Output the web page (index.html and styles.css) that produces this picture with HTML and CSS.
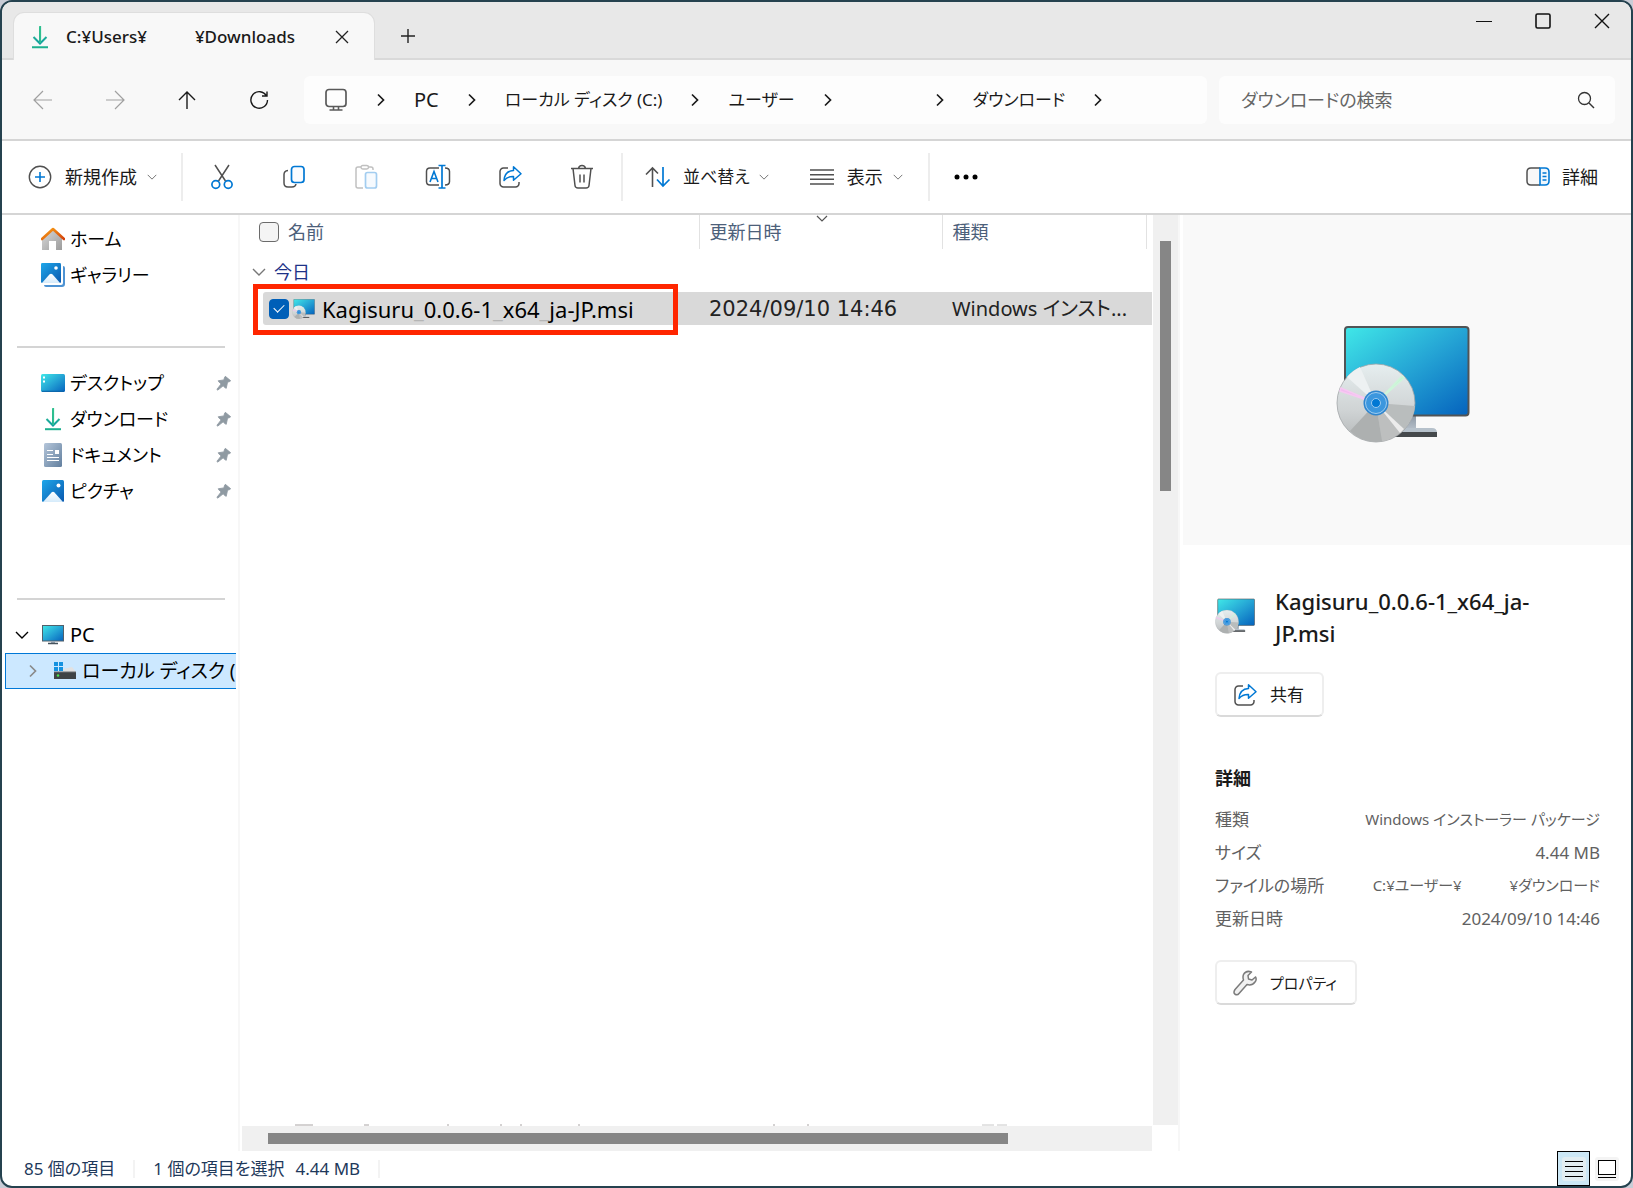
FILE: index.html
```html
<!DOCTYPE html>
<html lang="ja">
<head>
<meta charset="utf-8">
<title>ダウンロード</title>
<meta name="viewport" content="width=device-width, initial-scale=1">
<link rel="stylesheet" href="styles.css">
</head>
<body>
<svg class="defs" width="0" height="0" aria-hidden="true">
  <defs>
    <linearGradient id="g-screen" x1="0" y1="0" x2="1" y2="1"><stop offset="0" stop-color="#40e8e8"/><stop offset=".5" stop-color="#25a5d5"/><stop offset="1" stop-color="#0562bd"/></linearGradient>
    <linearGradient id="g-down" x1="0" y1="0" x2="0" y2="1"><stop offset="0" stop-color="#3ccb8c"/><stop offset="1" stop-color="#0f9da0"/></linearGradient>
    <linearGradient id="g-photo" x1="0" y1="0" x2="1" y2="1"><stop offset="0" stop-color="#1ea7ea"/><stop offset="1" stop-color="#0a58ae"/></linearGradient>
    <linearGradient id="g-hill" x1="0" y1="0" x2="0" y2="1"><stop offset="0" stop-color="#fff"/><stop offset="1" stop-color="#d5ebfb"/></linearGradient>
    <linearGradient id="g-wall" x1="0" y1="0" x2="1" y2="1"><stop offset="0" stop-color="#dadada"/><stop offset="1" stop-color="#9c9c9c"/></linearGradient>
    <linearGradient id="g-roof" x1="0" y1="0" x2="1" y2="1"><stop offset="0" stop-color="#fba417"/><stop offset="1" stop-color="#d3410b"/></linearGradient>
    <linearGradient id="g-doc" x1="0" y1="0" x2="1" y2="1"><stop offset="0" stop-color="#b5c6da"/><stop offset="1" stop-color="#627f9e"/></linearGradient>
    <linearGradient id="g-disc" x1="0" y1="0" x2="0" y2="1"><stop offset="0" stop-color="#e6eeef"/><stop offset=".6" stop-color="#cfd3d4"/><stop offset="1" stop-color="#b4b7b8"/></linearGradient>
    <linearGradient id="g-stand" x1="0" y1="0" x2="0" y2="1"><stop offset="0" stop-color="#8d98a4"/><stop offset="1" stop-color="#b9c3cd"/></linearGradient>
    <symbol id="i-download" viewBox="0 0 18 24"><path d="M9 1.500V18M2.500 12 9 18.500 15.500 12" fill="none" stroke="url(#g-down)" stroke-width="2"/><path d="M9.200 1V18" stroke="#2fbf90" stroke-width="1.800"/><path d="M1 22.200H17" stroke="#1db08f" stroke-width="2"/></symbol>
    <symbol id="i-right" viewBox="0 0 8 14"><path d="M1 1.500 6.500 7 1 12.500" fill="none" stroke="currentColor" stroke-width="1.700"/></symbol>
    <symbol id="i-down" viewBox="0 0 14 8"><path d="M1 1 7 7 13 1" fill="none" stroke="currentColor" stroke-width="1.400"/></symbol>
    <symbol id="i-share" viewBox="0 0 24 24"><path d="M10 3H5.500A3.500 3.500 0 0 0 2 6.500v12A3.500 3.500 0 0 0 5.500 22h12a3.500 3.500 0 0 0 3.500-3.500V17" fill="none" stroke="#505050" stroke-width="1.500"/><path d="M15.500 1.800 23 8.700 15.500 15.200V11.500C11 11.300 8.500 12.500 6 15.500 6.500 9.500 9.500 5.800 15.500 5.500Z" fill="none" stroke="#0078d4" stroke-width="1.500" stroke-linejoin="round"/></symbol>
    <symbol id="i-photo" viewBox="0 0 22 22"><rect width="22" height="22" rx="1.500" fill="url(#g-photo)"/><path d="M1 22 9.500 12.500Q11 11 12.500 12.500L21 22Z" fill="url(#g-hill)"/><circle cx="16.500" cy="5.500" r="2" fill="#fff"/></symbol>
    <symbol id="i-pin" viewBox="0 0 18 18"><path d="M10.500 1.500 16.500 6.500Q15 8 13 8L11.500 15Q10 14.500 8 12.200L2 17 1 16.200 5.800 10Q3 8 2.500 6.500L9 5.500Q9 3 10.500 1.500Z" fill="#8f9aa2" stroke="#8f9aa2" stroke-linejoin="round"/></symbol>
    <symbol id="i-pc" viewBox="0 0 22 20"><rect x=".5" y=".5" width="21" height="15.500" fill="url(#g-screen)" stroke="#52606b"/><path d="M9 16h4v2H9z" fill="#9aa7b3"/><path d="M6 18.500H16" stroke="#45525c" stroke-width="1.500"/></symbol>
    <symbol id="i-msi" viewBox="0 0 134 118">
      <path d="M63 90h17v16H63z" fill="url(#g-stand)"/><path d="M60 103h36q5 0 5 5H55z" fill="#b6c1cb"/><path d="M55 107h46v5H55z" fill="#45494c"/>
      <rect x="9" y="2" width="123.500" height="88.500" rx="3" fill="url(#g-screen)" stroke="#515456" stroke-width="2"/>
      <circle cx="40" cy="78" r="39" fill="url(#g-disc)" stroke="#a2a6a8" stroke-width=".8"/>
      <path d="M40 78 11 52A39 39 0 0 1 24 42Z" fill="#edf1f2"/><path d="M40 78 4 66 5 63Z" fill="#f3baf0" stroke="#f6c9f2" stroke-width="1.500"/><path d="M40 78 66 51 68 53Z" fill="#c8f3d5" stroke="#cff5da" stroke-width="1.500"/>
      <path d="M40 78 79 81A39 39 0 0 1 67 105Z" fill="#b9bdbd"/><path d="M40 78 67 105A39 39 0 0 1 46 116.500Z" fill="#bdbfbf"/><path d="M40 78 64 108 68 104Z" fill="#ececec"/><path d="M40 78 46 116.500A39 39 0 0 1 14 106Z" fill="#adb0b0"/>
      <circle cx="40" cy="78" r="12.500" fill="#2f86cf"/><circle cx="40" cy="78" r="10.500" fill="#3c97de" stroke="#a9d2f2" stroke-width=".9"/><circle cx="40" cy="78" r="4.500" fill="#0078d4" stroke="#9ccbf0" stroke-width="1"/>
    </symbol>
  </defs>
</svg>

<div class="window">
  <header class="titlebar">
    <div class="tab">
      <svg class="tab-icon" width="18" height="24"><use href="#i-download"/></svg>
      <span class="tab-title"><span>C:¥Users¥</span><span>¥Downloads</span></span>
      <button class="tab-close" aria-label="タブを閉じる"><svg width="14" height="14"><path d="M1 1 13 13M13 1 1 13" stroke="#222" stroke-width="1.300"/></svg></button>
    </div>
    <button class="tab-new" aria-label="新しいタブ"><svg width="16" height="16"><path d="M8 1V15M1 8H15" stroke="#222" stroke-width="1.400"/></svg></button>
    <div class="caption">
      <button aria-label="最小化"><svg width="16" height="16"><path d="M0 8.500H16" stroke="#111" stroke-width="1.200"/></svg></button>
      <button aria-label="最大化"><svg width="16" height="16"><rect x="1" y="1" width="14" height="14" rx="1.500" fill="none" stroke="#111" stroke-width="1.600"/></svg></button>
      <button aria-label="閉じる"><svg width="16" height="16"><path d="M1 1 15 15M15 1 1 15" stroke="#111" stroke-width="1.400"/></svg></button>
    </div>
  </header>

  <div class="navbar">
    <button class="step off" aria-label="戻る"><svg width="20" height="20"><path d="M19 10H1M10 1 1 10 10 19" fill="none" stroke="currentColor" stroke-width="1.200"/></svg></button>
    <button class="step off" aria-label="進む"><svg width="20" height="20"><path d="M1 10H19M10 1 19 10 10 19" fill="none" stroke="currentColor" stroke-width="1.200"/></svg></button>
    <button class="step" aria-label="上へ"><svg width="20" height="20"><path d="M10 19V2M2 10 10 2 18 10" fill="none" stroke="currentColor" stroke-width="1.400"/></svg></button>
    <button class="step" aria-label="更新"><svg width="20" height="20"><path d="M17.500 6A8.300 8.300 0 1 0 18.500 10M18 1.500V6H13" fill="none" stroke="currentColor" stroke-width="1.400"/></svg></button>
    <nav class="crumbs" aria-label="アドレス">
      <svg width="24" height="24"><rect x="2" y="1.500" width="20" height="17" rx="3" fill="none" stroke="#5a5a5a" stroke-width="1.700"/><path d="M9.500 18.500V22M14.500 18.500V22M5.500 22H18.500" fill="none" stroke="#5a5a5a" stroke-width="1.600"/></svg>
      <svg width="8" height="14"><use href="#i-right"/></svg>
      <a href="#pc" class="latin">PC</a>
      <svg width="8" height="14"><use href="#i-right"/></svg>
      <a href="#c">ローカル ディスク (C:)</a>
      <svg width="8" height="14"><use href="#i-right"/></svg>
      <a href="#users">ユーザー</a>
      <svg width="8" height="14"><use href="#i-right"/></svg>
      <span class="blank"></span>
      <svg width="8" height="14"><use href="#i-right"/></svg>
      <a href="#downloads">ダウンロード</a>
      <svg width="8" height="14"><use href="#i-right"/></svg>
    </nav>
    <div class="search">
      <input type="text" placeholder="ダウンロードの検索" aria-label="ダウンロードの検索">
      <svg width="18" height="18"><circle cx="7.500" cy="7.500" r="6" fill="none" stroke="#333" stroke-width="1.300"/><path d="M12 12 17 17" stroke="#333" stroke-width="1.400"/></svg>
    </div>
  </div>

  <div class="toolbar">
    <button class="tool-text new"><svg width="24" height="24"><circle cx="12" cy="12" r="10.700" fill="none" stroke="#505050" stroke-width="1.400"/><path d="M12 7V17M7 12H17" stroke="#0078d4" stroke-width="1.600"/></svg>新規作成<svg class="caret" width="10" height="6"><use href="#i-down"/></svg></button>
    <i class="sep"></i>
    <div class="tools">
    <button class="tool" aria-label="切り取り"><svg width="24" height="26"><path d="M5 1 15.500 17M19 1 8.500 17" stroke="#505050" stroke-width="1.500"/><circle cx="5.800" cy="20.500" r="3.900" fill="none" stroke="#0078d4" stroke-width="1.700"/><circle cx="18.200" cy="20.500" r="3.900" fill="none" stroke="#0078d4" stroke-width="1.700"/></svg></button>
    <button class="tool" aria-label="コピー"><svg width="24" height="24"><path d="M6 5.500Q2 6 2 9.500V18q0 4 4 4h4q3.500 0 4-3" fill="none" stroke="#505050" stroke-width="1.500"/><rect x="9.500" y="1.500" width="12.500" height="16" rx="3" fill="#fafcff" stroke="#0078d4" stroke-width="1.700"/></svg></button>
    <button class="tool" aria-label="貼り付け"><svg width="24" height="26"><path d="M7 3H4Q2 3 2 5V22q0 2 2 2h5M14 3h3q2 0 2 2v1" fill="none" stroke="#c0c0c0" stroke-width="1.500"/><rect x="7" y="1.500" width="7.500" height="3.500" rx="1.700" fill="#fff" stroke="#c0c0c0" stroke-width="1.400"/><rect x="11.500" y="8.500" width="11" height="15.500" rx="2" fill="#f6fafe" stroke="#a3cdf0" stroke-width="1.700"/></svg></button>
    <button class="tool" aria-label="名前の変更"><svg width="26" height="26"><path d="M14 4H5Q1.500 4 1.500 7.500v10Q1.500 21 5 21h9M20 4q4.500 0 4.500 3.500v10Q24.500 21 20 21" fill="none" stroke="#505050" stroke-width="1.500"/><path d="M5 18 9 7.500 13 18M6.500 14.500h5" fill="none" stroke="#0078d4" stroke-width="1.600"/><path d="M17 2V24M13.500 1.500h7M13.500 24h7" fill="none" stroke="#0078d4" stroke-width="1.700"/></svg></button>
    <button class="tool" aria-label="共有"><svg width="24" height="24"><use href="#i-share"/></svg></button>
    <button class="tool" aria-label="削除"><svg width="24" height="26"><path d="M1 4.500H23M8.500 4.500Q9 1.500 12 1.500T15.500 4.500M3 4.500 5 21.500Q5.300 24 8 24h8q2.700 0 3-2.500L21 4.500" fill="none" stroke="#505050" stroke-width="1.500"/><path d="M10 10.500v8M14 10.500v8" stroke="#505050" stroke-width="1.500"/></svg></button>
    </div>
    <i class="sep"></i>
    <button class="tool-text sort"><svg width="26" height="22"><path d="M7.500 21V2M1 8.500 7.500 2 13 7.500" fill="none" stroke="#505050" stroke-width="1.600"/><path d="M18 1V20M12 13.500 18 20 24.500 13.500" fill="none" stroke="#0078d4" stroke-width="1.700"/></svg>並べ替え<svg class="caret" width="10" height="6"><use href="#i-down"/></svg></button>
    <button class="tool-text view"><svg width="24" height="18"><path d="M0 2H24M0 6.700H24M0 11.300H24M0 16H24" stroke="#505050" stroke-width="1.400"/></svg>表示<svg class="caret" width="10" height="6"><use href="#i-down"/></svg></button>
    <i class="sep"></i>
    <button class="tool" aria-label="もっと見る"><svg width="26" height="6"><circle cx="4" cy="3" r="2.500"/><circle cx="13" cy="3" r="2.500"/><circle cx="22" cy="3" r="2.500"/></svg></button>
    <button class="tool-text details"><svg width="24" height="20"><path d="M14 1H5Q1 1 1 5v9q0 4 4 4h9" fill="#f8f8f8" stroke="#505050" stroke-width="1.500"/><path d="M14 1h5q4 0 4 4v9q0 4-4 4h-5z" fill="#eff7fd" stroke="#0078d4" stroke-width="1.600"/><path d="M16.500 6h4M16.500 9.500h4M16.500 13h4" stroke="#0078d4" stroke-width="1.500"/></svg>詳細</button>
  </div>

  <div class="body">
    <nav class="sidebar" aria-label="ナビゲーション">
      <ul>
        <li><a href="#home"><svg class="ico" width="24" height="24"><path d="M3 10 12 2 21 10V23H15V14H8V23H1V11Z" fill="url(#g-wall)"/><path d="M1 12 12 2 23 12" fill="none" stroke="url(#g-roof)" stroke-width="2.600" stroke-linejoin="round" stroke-linecap="round"/></svg>ホーム</a></li>
        <li><a href="#gallery"><svg class="ico" width="24" height="24"><path d="M22 3q2 0 2 2v16q0 3-3 3H5q-2 0-2-2H20q2 0 2-2z" fill="#4e93d3"/><use href="#i-photo" width="20" height="20"/></svg>ギャラリー</a></li>
      </ul>
      <hr>
      <ul>
        <li><a href="#desktop"><svg class="ico" width="24" height="18"><rect width="24" height="18" rx="1.500" fill="url(#g-screen)"/><path d="M2 2.500h2v2H2zM2 6.500h2v2H2z" fill="#fff"/><path d="M1 17.300H23" stroke="#0a62a5"/></svg>デスクトップ</a><svg class="pin" width="16" height="16"><use href="#i-pin"/></svg></li>
        <li><a href="#downloads"><svg class="ico" width="24" height="24"><use href="#i-download" x="3" width="18" height="24"/></svg>ダウンロード</a><svg class="pin" width="16" height="16"><use href="#i-pin"/></svg></li>
        <li><a href="#documents"><svg class="ico" width="24" height="24"><rect x="3" width="18" height="24" rx="1.500" fill="url(#g-doc)"/><path d="M6 7.500h6M6 11.500h6M6 14.500h12M6 17.500h12" stroke="#fff" stroke-width="1.200"/><path d="M14 7h4v4h-4z" fill="#fff"/></svg>ドキュメント</a><svg class="pin" width="16" height="16"><use href="#i-pin"/></svg></li>
        <li><a href="#pictures"><svg class="ico" width="24" height="22"><use href="#i-photo" x="1" width="22" height="22"/></svg>ピクチャ</a><svg class="pin" width="16" height="16"><use href="#i-pin"/></svg></li>
      </ul>
      <hr>
      <ul class="tree">
        <li><svg class="twist" width="14" height="8"><use href="#i-down"/></svg><a href="#pc" class="latin"><svg class="ico" width="24" height="20"><use href="#i-pc" x="1" width="22" height="20"/></svg>PC</a></li>
        <li class="current"><svg class="twist" width="8" height="14"><use href="#i-right"/></svg><a href="#c"><svg class="ico" width="24" height="20"><path d="M10 8 19 6 23 11H10z" fill="#e2e2e2"/><path d="M1 11H23v7H1z" fill="#3f4346"/><path d="M1 11H23" stroke="#6a6e72" stroke-width="1"/><circle cx="5" cy="14.500" r="1.200" fill="#49e24d"/><path d="M1 1h4v4H1zM6 1h4v4H6zM1 6h4v4H1zM6 6h4v4H6z" fill="#1592e0"/></svg>ローカル ディスク (</a></li>
      </ul>
    </nav>

    <main class="list">
      <div class="rows">
        <table>
          <colgroup><col><col class="c-date"><col class="c-type"><col class="c-rest"></colgroup>
          <thead>
            <tr>
              <th><label class="th-name"><input type="checkbox">名前</label></th>
              <th>更新日時<svg class="sorted" width="12" height="7"><path d="M1 1 6 6 11 1" fill="none" stroke="#555" stroke-width="1.200"/></svg></th>
              <th>種類</th>
              <td></td>
            </tr>
          </thead>
          <tbody>
            <tr class="group"><td colspan="4"><div><svg width="14" height="8"><use href="#i-down"/></svg>今日</div></td></tr>
            <tr class="file">
              <td><div class="cell"><label class="name"><input type="checkbox" checked><svg width="23" height="20"><use href="#i-msi"/></svg><span>Kagisuru<i>_</i>0.0.6-1<i>_</i>x64<i>_</i>ja-JP.msi</span></label><span class="frame"></span></div></td>
              <td class="date">2024/09/10 14:46</td>
              <td class="type" colspan="2">Windows インスト...</td>
            </tr>
          </tbody>
        </table>
        <svg class="next-row" width="720" height="2"><path d="M1 1h18M70 1h5M153 1h2M206 1h2M226 1h2M284 1h2M479 1h2M513 1h2" stroke="#a9a4a4"/><path d="M688 1h12M703 1h10" stroke="#c8c8c8"/></svg>
      </div>
      <div class="vtrack"><div class="vthumb"></div></div>
      <div class="htrack"><div class="hthumb"></div></div>
    </main>

    <aside class="pane">
      <div class="preview"><svg width="134" height="118"><use href="#i-msi"/></svg></div>
      <div class="info">
        <div class="head"><svg width="40" height="36"><use href="#i-msi"/></svg><h2>Kagisuru_0.0.6-1_x64_ja-JP.msi</h2></div>
        <button class="btn"><svg width="24" height="24"><use href="#i-share"/></svg>共有</button>
        <h3>詳細</h3>
        <dl>
          <div><dt>種類</dt><dd class="kana">Windows インストーラー パッケージ</dd></div>
          <div><dt>サイズ</dt><dd>4.44 MB</dd></div>
          <div><dt>ファイルの場所</dt><dd class="path kana"><span>C:¥ユーザー¥</span><span>¥ダウンロード</span></dd></div>
          <div><dt>更新日時</dt><dd>2024/09/10 14:46</dd></div>
        </dl>
        <button class="btn kana"><svg width="24" height="26"><path d="M22.500 7 19 10 15.500 9 15 5.500 18.500 2Q13 0 10.500 4.500 9.500 7 10.500 10L2 19.500Q0 22.500 2 24.300 4.500 25.500 6 23.500L14 14.500Q19 16 22 12 24 9.500 22.500 7Z" fill="#f1f1f1" stroke="#7b7b7b" stroke-width="1.500" stroke-linejoin="round"/></svg>プロパティ</button>
      </div>
    </aside>
  </div>

  <footer class="status">
    <span>85 個の項目</span><i></i><span class="picked">1 個の項目を選択<span>4.44 MB</span></span><i></i>
    <div class="modes">
      <button class="mode on" aria-label="詳細表示"><svg width="24" height="24"><rect width="24" height="24" rx="3" fill="#e2eef2"/><path d="M3 4.500H21M3 9.500H21M3 14.500H21M3 19.500H21" stroke="#000"/></svg></button>
      <button class="mode" aria-label="大アイコン"><svg width="24" height="24"><rect width="24" height="24" rx="3" fill="#f4f4f4"/><rect x="3.500" y="3.500" width="17" height="14" fill="#fff" stroke="#000"/><path d="M3 20.500H21" stroke="#000"/></svg></button>
    </div>
  </footer>
</div>
</body>
</html>
```
FILE: styles.css
```css
* { box-sizing: border-box; }

body {
  margin: 0;
  background: #c9ccd6;
  color: #1a1a1a;
  font-family: "Noto Sans", "Noto Sans CJK JP", sans-serif;
  font-size: 17px;
  line-height: 24px;
  font-feature-settings: "palt";
}

ul, dl, dd, h2, h3 { margin: 0; padding: 0; }
ul { list-style: none; }
a { color: inherit; text-decoration: none; }
svg { display: block; flex: none; }

button {
  display: flex;
  align-items: center;
  justify-content: center;
  padding: 0;
  border: 0;
  background: none;
  color: inherit;
  font: inherit;
  font-feature-settings: inherit;
}

.defs { position: absolute; }
.latin { font-size: 20px; }

.window {
  display: flex;
  flex-direction: column;
  min-height: 100vh;
  overflow: hidden;
  border: 2px solid #25424f;
  border-radius: 12px;
  background: #fff;
}

/* Title bar */
.titlebar {
  display: flex;
  height: 58px;
  padding-left: 12px;
  background: #e8e8e8;
  box-shadow: inset 0 -2px #d9d9d9;
}
.tab {
  display: flex;
  align-items: center;
  width: 360px;
  margin-top: 11px;
  padding: 0 16px 0 17px;
  border-radius: 10px 10px 0 0;
  background: #f8f8f8;
  box-shadow: 0 0 0 1px #dedede;
  clip-path: inset(-2px -2px 0 -2px);
}
.tab-title {
  display: flex;
  flex: 1;
  gap: 48px;
  margin-left: 17px;
  font-weight: 500;
}
.tab-close { width: 32px; height: 32px; }
.tab-new { width: 68px; margin-top: 10px; }
.caption { display: flex; margin-left: auto; }
.caption button { width: 59px; height: 38px; }

/* Address row */
.navbar {
  display: flex;
  align-items: center;
  height: 81px;
  padding: 0 16px 2px 5px;
  background: #f8f8f8;
  box-shadow: inset 0 -2px #d5d5d5;
}
.step { width: 72px; height: 48px; }
.off { color: #a0a0a0; }
.crumbs {
  display: flex;
  flex: 1;
  align-items: center;
  gap: 29px;
  height: 48px;
  margin-left: 9px;
  padding-left: 20px;
  border-radius: 6px;
  background: #fdfdfd;
  white-space: nowrap;
}
.blank { width: 46px; }
.search {
  display: flex;
  align-items: center;
  width: 396px;
  height: 48px;
  margin-left: 12px;
  padding: 0 20px 0 22px;
  border-radius: 6px;
  background: #fdfdfd;
}
.search input {
  flex: 1;
  min-width: 0;
  padding: 0;
  border: 0;
  outline: 0;
  background: none;
  font: inherit;
  font-size: 18px;
  font-feature-settings: inherit;
}
.search input::placeholder { color: #666; }

/* Command bar */
.toolbar {
  display: flex;
  align-items: center;
  height: 74px;
  padding: 0 33px 2px 26px;
  box-shadow: inset 0 -2px #d5d5d5;
}
.tools { display: flex; margin: 0 3px; }
.tool { width: 72px; height: 48px; }
.tool-text { gap: 13px; height: 48px; font-size: 18px; }
.caret { margin-left: -3px; color: #777; }
.sep { width: 2px; height: 48px; background: #ededed; }
.new { margin-right: 24px; }
.sort { gap: 12px; margin: 0 41px 0 22px; font-size: 17px; }
.view { margin-right: 25px; }
.details { margin-left: auto; gap: 12px; }

/* Body */
.body {
  display: grid;
  flex: 1;
  grid-template-columns: 238px minmax(0, 1fr) 453px;
}
.sidebar {
  overflow: hidden;
  padding: 6px 0 0 3px;
  border-right: 2px solid #f7f7f7;
  color: #000;
  font-size: 18px;
}
.sidebar li {
  display: flex;
  align-items: center;
  height: 36px;
  padding: 0 6px 0 36px;
}
.sidebar a { display: flex; align-items: center; gap: 5px; white-space: nowrap; }
.pin { margin-left: auto; }
.sidebar hr {
  height: 2px;
  margin: 53px 13px 17px 12px;
  border: 0;
  background: #d4d4d4;
}
.sidebar ul + hr + ul + hr { margin-top: 89px; }
.sidebar .tree li { gap: 12px; padding: 0 0 0 10px; }
.sidebar .tree .current {
  gap: 16px;
  margin-right: 2px;
  padding-left: 23px;
  border: 1px solid #0078d7;
  border-right: 0;
  background: #cce8ff;
  font-size: 19px;
}
.current .twist { color: #8a8a8a; }

.list {
  display: grid;
  grid-template-columns: minmax(0, 1fr) 26px;
  grid-template-rows: 1fr 25px;
}
.rows {
  display: flex;
  flex-direction: column;
  justify-content: space-between;
}
.next-row { margin-left: 54px; }

table {
  width: 100%;
  border-collapse: collapse;
  table-layout: fixed;
}
.c-date { width: 243px; }
.c-type { width: 204px; }
.c-rest { width: 6px; }
th, td { padding: 0; text-align: left; }
th {
  position: relative;
  height: 34px;
  padding-left: 10px;
  border-right: 1px solid #e2e2e2;
  color: #4c607a;
  font-size: 18px;
  font-weight: 400;
}
.th-name { display: flex; align-items: center; gap: 9px; padding-left: 9px; }
.sorted { position: absolute; top: 0; left: 50%; margin-left: -5px; }

input[type="checkbox"] {
  flex: none;
  width: 20px;
  height: 20px;
  margin: 0;
  border: 1px solid #6b6b6b;
  border-radius: 4px;
  background: #f4f4f4;
  appearance: none;
}
input[type="checkbox"]:checked {
  display: grid;
  place-items: center;
  border-color: #005fb8;
  background: #005fb8;
}
input[type="checkbox"]:checked::before {
  width: 9px;
  height: 5px;
  margin-top: -3px;
  border: solid #fff;
  border-width: 0 0 1px 1px;
  content: "";
  transform: rotate(-45deg);
}

.group td { height: 43px; padding: 3px 0 0 12px; color: #1e3287; font-size: 18px; }
.group div { display: flex; align-items: center; gap: 8px; }
.group svg { color: #777; }

.file { height: 33px; color: #000; font-size: 21px; white-space: nowrap; }
.file td + td { background: #d9d9d9; }
.cell { position: relative; padding-left: 23px; }
.name {
  display: flex;
  align-items: center;
  height: 33px;
  padding-left: 6px;
  border-radius: 3px 0 0 3px;
  background: #d9d9d9;
  font-size: 22px;
}
.name svg { margin: 0 7px 0 3px; }
.name i { color: #b5b5b5; font-style: normal; }
.frame {
  position: absolute;
  inset: -8px 21px -10px 13px;
  border: 5px solid #ff2600;
}
.file .date { padding-left: 10px; color: #222; font-family: "DejaVu Sans", sans-serif; }
.file .type { padding-left: 10px; color: #222; font-size: 20px; }

.vtrack { margin: 0 0 1px 1px; padding: 26px 7px 0; background: #f0f0f0; }
.vthumb { height: 250px; background: #868686; }
.htrack { margin-left: 2px; padding: 7px 144px 0 26px; background: #f0f0f0; }
.hthumb { height: 11px; background: #868686; }

/* Details pane */
.pane { padding-left: 3px; border-left: 2px solid #f7f7f7; }
.preview {
  display: grid;
  place-items: center;
  height: 330px;
  background: #f9f9f9;
}
.preview svg { margin: 8px 8px 0 0; }
.info { padding: 40px 31px 0 32px; }
.head { display: flex; align-items: flex-start; gap: 20px; }
.head svg { margin-top: 13px; }
.head h2 { max-width: 288px; font-size: 22px; font-weight: 500; line-height: 32px; }
.btn {
  gap: 13px;
  height: 45px;
  padding: 0 18px 0 16px;
  border: 2px solid #eee;
  border-bottom-color: #dadada;
  border-radius: 6px;
  background: #fff;
}
.kana { font-size: 15px; }
.head + .btn { margin-top: 23px; }
.info h3 { margin: 49px 0 13px; font-size: 18px; font-weight: 700; line-height: 24px; }
.info dl { margin-bottom: 25px; color: #616161; }
.info dl div { display: flex; justify-content: space-between; line-height: 33px; }
.path { display: flex; gap: 48px; }

/* Status bar */
.status {
  display: flex;
  align-items: center;
  height: 35px;
  padding: 0 12px 0 22px;
  color: #1e395b;
}
.status i { width: 2px; height: 18px; margin: 0 18px; background: #f3f3f3; }
.picked { display: flex; gap: 11px; }
.modes { display: flex; align-items: center; gap: 5px; margin-left: auto; }
.mode.on { width: 33px; height: 35px; border: 1px solid #000; background: #cce8f6; }
```
